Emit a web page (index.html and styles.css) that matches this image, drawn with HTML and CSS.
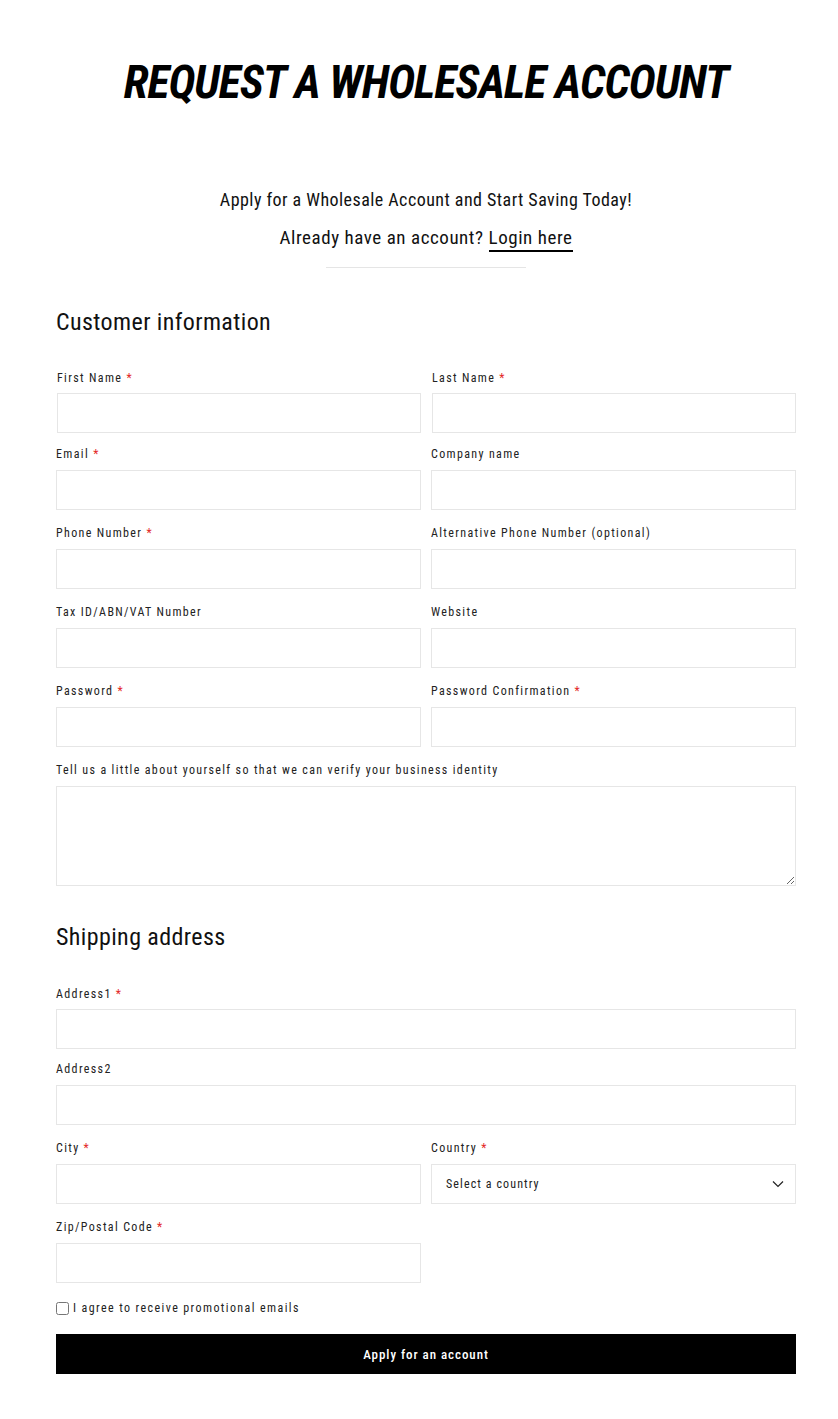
FILE: index.html
```html
<!DOCTYPE html>
<html lang="en">
<head>
<meta charset="utf-8">
<title>Request a Wholesale Account</title>
<link rel="stylesheet" href="styles.css">
</head>
<body>
<main class="page">
  <h1 class="title">REQUEST A WHOLESALE ACCOUNT</h1>
  <div class="intro">
    <p class="intro-line">Apply for a Wholesale Account and Start Saving Today!</p>
    <p class="intro-line second">Already have an account? <a class="login-link" href="#">Login here</a></p>
    <hr class="divider">
  </div>

  <form class="form">
    <h2 class="section-title">Customer information</h2>
    <div class="grid">
      <div class="field first-row shifted"><label class="label">First Name <span class="req">*</span></label><input class="input" type="text"></div>
      <div class="field first-row shifted"><label class="label">Last Name <span class="req">*</span></label><input class="input" type="text"></div>
      <div class="field"><label class="label">Email <span class="req">*</span></label><input class="input" type="email"></div>
      <div class="field"><label class="label">Company name</label><input class="input" type="text"></div>
      <div class="field"><label class="label">Phone Number <span class="req">*</span></label><input class="input" type="tel"></div>
      <div class="field"><label class="label">Alternative Phone Number (optional)</label><input class="input" type="tel"></div>
      <div class="field"><label class="label">Tax ID/ABN/VAT Number</label><input class="input" type="text"></div>
      <div class="field"><label class="label">Website</label><input class="input" type="text"></div>
      <div class="field"><label class="label">Password <span class="req">*</span></label><input class="input" type="password"></div>
      <div class="field"><label class="label">Password Confirmation <span class="req">*</span></label><input class="input" type="password"></div>
      <div class="field span-2"><label class="label">Tell us a little about yourself so that we can verify your business identity</label><textarea class="input textarea"></textarea></div>
    </div>

    <h2 class="section-title shipping">Shipping address</h2>
    <div class="grid">
      <div class="field span-2 first-row address-first"><label class="label">Address1 <span class="req">*</span></label><input class="input" type="text"></div>
      <div class="field span-2"><label class="label">Address2</label><input class="input" type="text"></div>
      <div class="field"><label class="label">City <span class="req">*</span></label><input class="input" type="text"></div>
      <div class="field"><label class="label">Country <span class="req">*</span></label>
        <div class="select">
          <span class="select-text">Select a country</span>
          <svg class="chevron" width="12" height="8" viewBox="0 0 12 8"><path d="M1 1.5 L6 6.5 L11 1.5" fill="none" stroke="#222" stroke-width="1.2"/></svg>
        </div>
      </div>
      <div class="field"><label class="label">Zip/Postal Code <span class="req">*</span></label><input class="input" type="text"></div>
    </div>

    <label class="check"><input class="checkbox" type="checkbox"> I agree to receive promotional emails</label>
    <button class="submit" type="button">Apply for an account</button>
  </form>
</main>
</body>
</html>
```

FILE: styles.css
```css
* { box-sizing: border-box; }
html, body { margin: 0; padding: 0; background: #fff; }
body {
  font-family: "Roboto Condensed", Roboto, "Liberation Sans", sans-serif;
  font-stretch: condensed;
  color: #111;
}
.page {
  width: 740px;
  margin-left: 56px;
  padding-top: 56px;
  padding-bottom: 45px;
}
.title {
  margin: 0;
  text-align: center;
  font-size: 46px;
  line-height: 52px;
  font-weight: 700;
  font-style: italic;
  letter-spacing: -1px;
  color: #000;
}
.intro {
  margin-top: 80px;
  text-align: center;
}
.intro-line {
  margin: 0 0 14px;
  font-size: 18px;
  line-height: 24px;
  letter-spacing: 0.45px;
  color: #111;
}
.intro-line.second {
  margin-bottom: 0;
  font-size: 19px;
  letter-spacing: 0.55px;
}
.login-link {
  color: #111;
  text-decoration: none;
  border-bottom: 2px solid #000;
  padding-bottom: 1px;
}
.divider {
  width: 200px;
  margin: 17px auto 0;
  border: 0;
  border-top: 1px solid #e5e5e5;
}
.form { margin-top: 40px; }
.section-title {
  margin: 0 0 34px;
  font-size: 24px;
  line-height: 28px;
  font-weight: 400;
  letter-spacing: 0.4px;
  color: #111;
}
.section-title.shipping { margin-top: 37px; margin-bottom: 35px; }
.grid {
  display: grid;
  grid-template-columns: 1fr 1fr;
  column-gap: 10px;
  row-gap: 15px;
}
.span-2 { grid-column: span 2; }
.field { display: flex; flex-direction: column; gap: 8px; }
.first-row { gap: 7px; margin-bottom: -2px; }
.address-first { margin-bottom: -3px; }
.shifted { padding-left: 1px; }
.label {
  font-size: 12px;
  line-height: 16px;
  letter-spacing: 1.35px;
  color: #222;
}
.req { color: #e32727; }
.input {
  display: block;
  width: 100%;
  height: 40px;
  border: 1px solid #e6e6e6;
  border-radius: 0;
  background: #fff;
  font: inherit;
  margin: 0;
}
.textarea { height: 100px; resize: vertical; }
.select {
  height: 40px;
  border: 1px solid #e6e6e6;
  display: flex;
  align-items: center;
  justify-content: space-between;
  padding: 0 11px 0 14px;
}
.select-text { font-size: 12px; letter-spacing: 1.1px; color: #222; }
.check {
  display: flex;
  align-items: center;
  gap: 4px;
  margin-top: 18px;
  font-size: 12px;
  letter-spacing: 1.4px;
  color: #222;
}
.checkbox { margin: 0; width: 13px; height: 13px; }
.submit {
  display: block;
  width: 100%;
  height: 40px;
  margin-top: 19px;
  border: 0;
  background: #000;
  color: #fff;
  font-family: inherit;
  font-size: 13px;
  font-weight: 500;
  letter-spacing: 0.95px;
}
```
